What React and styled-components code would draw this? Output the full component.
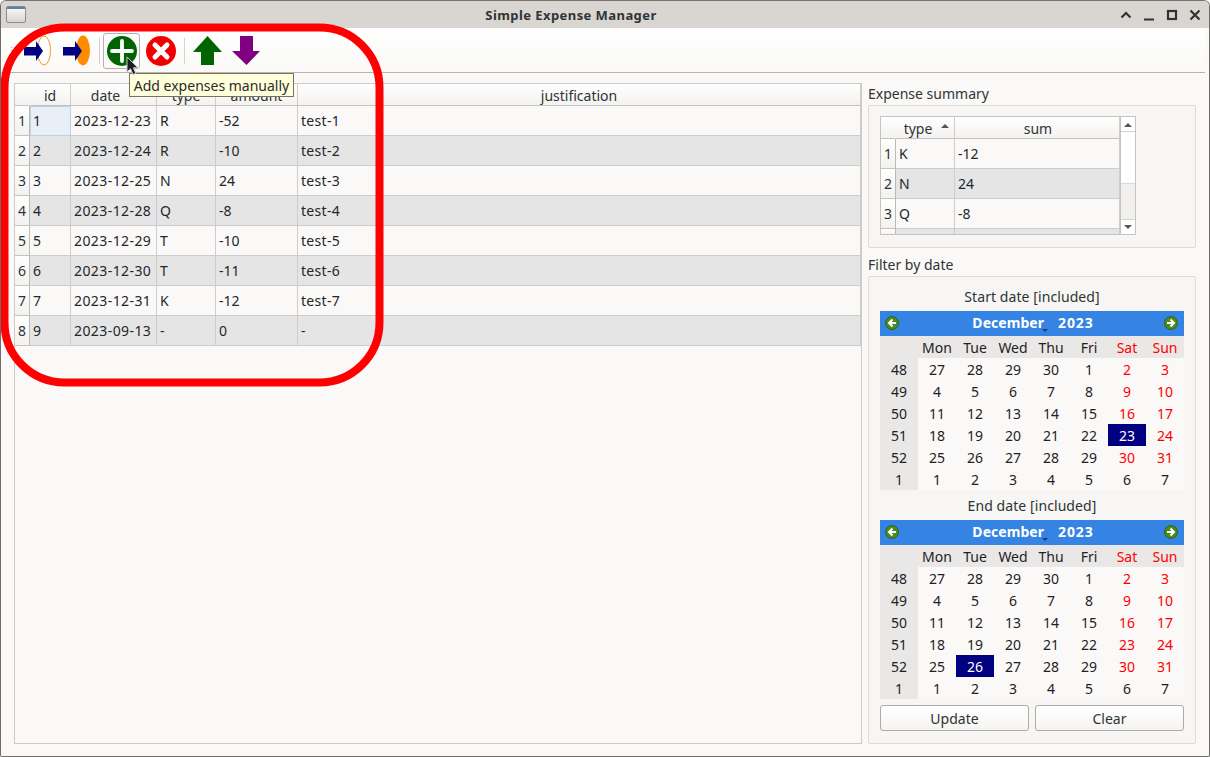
import React from "react";
import styled, { createGlobalStyle } from "styled-components";

const Global = createGlobalStyle`
  html, body { margin: 0; padding: 0; background: #fff; }
  body { font-family: "Noto Sans", sans-serif; font-size: 14px; color: #2e3436; }
`;

const Window = styled.div`
  position: relative; width: 1210px; height: 757px; box-sizing: border-box; overflow: hidden;
  display: flex; flex-direction: column; border: 1px solid #6f6d6a; border-top-color: #77736f;
  border-radius: 6px 6px 2px 2px; background: #faf9f7;
`;
const TitleBar = styled.div`
  height: 27px; flex: none; background: #d9d5d1; display: grid; grid-template-columns: auto 1fr auto; align-items: center; padding: 0 5px;
`;
const Title = styled.div`font-size: 13px; font-weight: 700; color: #2e3436; letter-spacing: .43px; text-align: center; padding-right: 3px;`;
const WinApp = styled.div`
  width: 18px; height: 15px; border: 1px solid #8f8d8a; border-radius: 2px; background: linear-gradient(#5d7fa8 0 2px, #f6f6f6 2px, #d6d6d6);
`;
const WinControls = styled.div`display: flex; justify-content: flex-end; gap: 9px; padding-right: 2px; align-items:center;`;
const Toolbar = styled.div`
  height: 45px; flex: none; box-sizing: border-box; display: flex; align-items: center; padding: 2px 0 0 9px;
  background: linear-gradient(#fff, #faf9f7); border-bottom: 1px solid #b8b5b1; margin-right: 4px;
`;
const Handle = styled.div`
  width: 5px; height: 10px; margin-right: 2px; background-image: radial-gradient(#aaa 0.7px, transparent 0.9px); background-size: 3px 3px;
`;
const ToolBtn = styled.div`
  width: 37px; height: 36px; box-sizing: border-box; display: flex; align-items: center; justify-content: center; margin: 0 1px;
  border: 1px solid ${p => (p.$hover ? "#b4b2af" : "transparent")}; border-radius: 3px; background: ${p => (p.$hover ? "#fbfbfa" : "transparent")};
`;
const ToolSep = styled.div`width: 1px; height: 26px; background: #d5d2cf; margin: 0 2px 0 4px;`;
const Main = styled.div`flex: 1; min-height: 0; display: flex; padding: 10px 13px 12px 13px; gap: 6px;`;
const TableFrame = styled.div`
  width: 848px; flex: none; box-sizing: border-box; border: 1px solid #cdcac6; background: #faf9f7; display: flex; flex-direction: column;
`;
const Row = styled.div`
  display: grid; grid-template-columns: ${p => p.$cols}; height: ${p => p.$h}px; box-sizing: border-box; flex: none;
`;
const HeadCell = styled.div`
  display: flex; align-items: center; justify-content: center; box-sizing: border-box; position: relative; padding-top: 2px;
  padding-right: ${p => p.$pr || 0}px; padding-left: ${p => p.$pl || 0}px;
  background: linear-gradient(#fff, #f3f2f0); border-right: 1px solid ${p => (p.$plain ? "transparent" : "#d0cdc9")}; border-bottom: 1px solid #c6c3bf; color: #2e3436;
`;
const RowHead = styled.div`
  display: flex; align-items: center; justify-content: center; box-sizing: border-box;
  background: linear-gradient(#fff, #f3f2f0); border-right: 1px solid #bdbab6; border-bottom: 1px solid #c6c3bf;
`;
const Cell = styled.div`
  display: flex; align-items: center; box-sizing: border-box; padding-left: 3px; white-space: nowrap; overflow: hidden;
  background: ${p => (p.$current ? "#e9eff6" : p.$alt ? "#e5e5e5" : "#faf9f7")};
  border-right: 1px solid #cdcdcd; border-bottom: 1px solid #cdcdcd; color: #232729;
  letter-spacing: ${p => p.$track || 0}px;
  ${p => p.$current && "outline: 1px solid #bcd0e8; outline-offset: -1px;"}
`;
const Side = styled.div`flex: 1; min-width: 0; display: flex; flex-direction: column;`;
const GroupTitle = styled.div`height: 22px; line-height: 22px; flex: none; color: #2e3436;`;
const SummaryBox = styled.div`
  box-sizing: border-box; height: 143px; flex: none; margin-bottom: 6px; padding: 10px 11px; background: #f7f6f4; border: 1px solid #dddad7; border-radius: 2px;
`;
const SummaryTable = styled.div`
  width: 256px; height: 119px; box-sizing: border-box; border: 1px solid #c6c4c1; display: flex; background: #faf9f7;
`;
const SummaryBody = styled.div`flex: 1; min-width: 0; overflow: hidden; display: flex; flex-direction: column;`;
const Scroll = styled.div`
  width: 14px; flex: none; display: flex; flex-direction: column; border-left: 1px solid #c6c4c1; background: #fff;
`;
const ScrollBtn = styled.div`height: 14px; flex: none; display: flex; align-items: center; justify-content: center; background: #fff;
  border-${p => (p.$top ? "bottom" : "top")}: 1px solid #d4d2cf;`;
const ScrollTrack = styled.div`flex: 1; background: #fff;`;
const ScrollThumb = styled.div`height: 36px; flex: none; background: #f1f0ee; border-top: 1px solid #dad8d5; box-sizing: border-box;`;
const SortUp = styled.span`
  position: absolute; right: 5px; top: 7px; width: 0; height: 0; border-left: 4px solid transparent; border-right: 4px solid transparent; border-bottom: 4px solid #555;
`;
const FilterBox = styled.div`
  flex: 1; min-height: 0; box-sizing: border-box; padding: 10px 11px 11px; background: #f7f6f4; border: 1px solid #dddad7; border-radius: 2px;
  display: flex; flex-direction: column;
`;
const CalLabel = styled.div`height: 24px; flex: none; text-align: center; line-height: 20px; color: #2e3436; letter-spacing: .08px;`;
const Cal = styled.div`width: 304px; flex: none; display: flex; flex-direction: column; margin-bottom: ${p => p.$mb || 0}px;`;
const CalNav = styled.div`
  height: 25px; box-sizing: border-box; background: #3584e4; display: flex; align-items: center; justify-content: space-between; padding: 0 6px 2px 5px; color: #fff; font-weight: 700;
`;
const CalMonth = styled.div`display: flex; align-items: center; font-size: 14px; letter-spacing: .05px; position: relative; gap: 14px; margin-left: 3px;`;
const CalYear = styled.span`letter-spacing: .9px;`;
const MonthArrow = styled.span`
  position: absolute; left: 70px; top: 16px; width: 0; height: 0; border-left: 3px solid transparent; border-right: 3px solid transparent; border-top: 3px solid #1c3f70;
`;
const CalGrid = styled.div`display: grid; grid-template-columns: repeat(8, 38px); grid-auto-rows: 22px; background: #faf9f7;`;
const CalCell = styled.div`
  display: flex; align-items: center; justify-content: center; background: ${p => (p.$sel ? "#000080" : p.$side ? "#e9e8e6" : "transparent")};
  color: ${p => (p.$sel ? "#fff" : p.$red ? "#f00" : "#1f2224")};
`;
const Buttons = styled.div`display: flex; gap: 6px; margin-top: 6px;`;
const Btn = styled.div`
  width: 149px; height: 26px; box-sizing: border-box; display: flex; align-items: center; justify-content: center;
  border: 1px solid #adaba8; border-radius: 3px; background: linear-gradient(#fff, #f5f4f2); color: #2e3436;
`;
const Tooltip = styled.div`
  position: absolute; left: 128px; top: 72px; width: 165px; height: 24px; box-sizing: border-box; white-space: nowrap; text-align: center; line-height: 23px;
  background: #ffffdc; border: 1px solid #77745a; color: #2b2b2b;
`;
const Annotation = styled.svg`position: absolute; left: 0; top: 0; pointer-events: none;`;
const Cursor = styled.svg`position: absolute; left: 125px; top: 55px;`;

const ToolIcon = ({ children }) => (
  <svg width="31" height="32" viewBox="0 0 31 32">{children}</svg>
);
const Arrow = () => <path d="M3 12H15V6L22 16L15 26V20.500H3Z" fill="#000080" />;
const IconIn = () => (
  <ToolIcon>
    <ellipse cx="23" cy="15.500" rx="6.500" ry="14.500" fill="#fff" stroke="#f59a23" strokeWidth="1" />
    <Arrow />
  </ToolIcon>
);
const IconOut = () => (
  <ToolIcon>
    <ellipse cx="23" cy="15.500" rx="7" ry="15" fill="#ff8c00" />
    <Arrow />
  </ToolIcon>
);
const IconAdd = () => (
  <ToolIcon>
    <circle cx="16" cy="16" r="15" fill="#006400" />
    <path d="M16 6v20M6 16h20" stroke="#fff" strokeWidth="3.800" strokeLinecap="round" />
  </ToolIcon>
);
const IconDel = () => (
  <ToolIcon>
    <circle cx="16" cy="16" r="15" fill="#f00000" />
    <path d="M10 10l12 12M22 10l-12 12" stroke="#fff" strokeWidth="5" strokeLinecap="round" />
  </ToolIcon>
);
const IconUp = () => (
  <ToolIcon><path d="M16.500 1L31 17H23V30H10V17H2Z" fill="#006400" /></ToolIcon>
);
const IconDown = () => (
  <ToolIcon><path d="M10 1H23V16H30L16.500 30L2 16H10Z" fill="#800080" /></ToolIcon>
);
const NavIcon = ({ dir }) => (
  <svg width="14" height="14" viewBox="0 0 14 14">
    <circle cx="7" cy="7" r="6.500" fill="#4e8a1e" stroke="#2a5c06" strokeWidth="0.800" />
    <path d={dir === "left" ? "M11 7H5M7.500 3.500L4 7l3.500 3.500" : "M3 7H9M6.500 3.500L10 7l-3.500 3.500"} stroke="#fff" strokeWidth="2" fill="none" />
  </svg>
);

const CtlIcon = ({ children }) => (
  <svg width="14" height="14" viewBox="0 0 14 14" fill="none" stroke="#2e3436" strokeWidth="2.200">{children}</svg>
);

const COLS = "15px 41px 86px 59px 82px 1fr";
const TRACK = [0, 0.42, 0, 0, 0.3];
const rows = [
  ["1", "2023-12-23", "R", "-52", "test-1"],
  ["2", "2023-12-24", "R", "-10", "test-2"],
  ["3", "2023-12-25", "N", "24", "test-3"],
  ["4", "2023-12-28", "Q", "-8", "test-4"],
  ["5", "2023-12-29", "T", "-10", "test-5"],
  ["6", "2023-12-30", "T", "-11", "test-6"],
  ["7", "2023-12-31", "K", "-12", "test-7"],
  ["9", "2023-09-13", "-", "0", "-"],
];
const SUMCOLS = "15px 59px 1fr";
const summary = [["K", "-12"], ["N", "24"], ["Q", "-8"]];
const days = ["Mon", "Tue", "Wed", "Thu", "Fri", "Sat", "Sun"];
const weeks = [
  [48, [27, 28, 29, 30, 1, 2, 3]],
  [49, [4, 5, 6, 7, 8, 9, 10]],
  [50, [11, 12, 13, 14, 15, 16, 17]],
  [51, [18, 19, 20, 21, 22, 23, 24]],
  [52, [25, 26, 27, 28, 29, 30, 31]],
  [1, [1, 2, 3, 4, 5, 6, 7]],
];

const Calendar = ({ selWeek, selDay, mb }) => (
  <Cal $mb={mb}>
    <CalNav>
      <NavIcon dir="left" />
      <CalMonth>
        <span>December</span>
        <MonthArrow />
        <CalYear>2023</CalYear>
      </CalMonth>
      <NavIcon dir="right" />
    </CalNav>
    <CalGrid>
      <CalCell $side />
      {days.map((d, i) => (
        <CalCell key={d} $side $red={i > 4}>{d}</CalCell>
      ))}
      {weeks.map(([w, ds], wi) => (
        <React.Fragment key={w}>
          <CalCell $side>{w}</CalCell>
          {ds.map((d, i) => (
            <CalCell key={i} $red={i > 4 && wi < 5} $sel={wi === selWeek && i === selDay}>{d}</CalCell>
          ))}
        </React.Fragment>
      ))}
    </CalGrid>
  </Cal>
);

export default function App() {
  return (
    <>
      <Global />
      <Window>
        <TitleBar>
          <WinApp />
          <Title>Simple Expense Manager</Title>
          <WinControls>
            <CtlIcon><path d="M2.500 9.500L7 5l4.500 4.500" /></CtlIcon>
            <CtlIcon><path d="M2 11.500h10" /></CtlIcon>
            <CtlIcon><rect x="3" y="3" width="8" height="8" /></CtlIcon>
            <CtlIcon><path d="M2.500 2.500l9 9M11.500 2.500l-9 9" /></CtlIcon>
          </WinControls>
        </TitleBar>
        <Toolbar>
          <Handle />
          <ToolBtn><IconIn /></ToolBtn>
          <ToolBtn><IconOut /></ToolBtn>
          <ToolSep />
          <ToolBtn $hover><IconAdd /></ToolBtn>
          <ToolBtn><IconDel /></ToolBtn>
          <ToolSep />
          <ToolBtn><IconUp /></ToolBtn>
          <ToolBtn><IconDown /></ToolBtn>
        </Toolbar>
        <Main>
          <TableFrame>
            <Row $cols={COLS} $h={22}>
              <HeadCell $plain />
              <HeadCell>id</HeadCell>
              <HeadCell $pr={16}>date</HeadCell>
              <HeadCell>type</HeadCell>
              <HeadCell>amount</HeadCell>
              <HeadCell>justification</HeadCell>
            </Row>
            {rows.map((r, i) => (
              <Row key={i} $cols={COLS} $h={30}>
                <RowHead>{i + 1}</RowHead>
                {r.map((c, j) => (
                  <Cell key={j} $alt={i % 2 === 1} $current={i === 0 && j === 0} $track={TRACK[j]}>{c}</Cell>
                ))}
              </Row>
            ))}
          </TableFrame>
          <Side>
            <GroupTitle>Expense summary</GroupTitle>
            <SummaryBox>
              <SummaryTable>
                <SummaryBody>
                  <Row $cols={SUMCOLS} $h={22}>
                    <HeadCell $plain />
                    <HeadCell $pr={14}>type<SortUp /></HeadCell>
                    <HeadCell $pl={2}>sum</HeadCell>
                  </Row>
                  {summary.map((r, i) => (
                    <Row key={i} $cols={SUMCOLS} $h={30}>
                      <RowHead>{i + 1}</RowHead>
                      {r.map((c, j) => <Cell key={j} $alt={i === 1}>{c}</Cell>)}
                    </Row>
                  ))}
                  <Row $cols={SUMCOLS} $h={7}>
                    <RowHead />
                    <Cell $alt />
                    <Cell $alt />
                  </Row>
                </SummaryBody>
                <Scroll>
                  <ScrollBtn $top><svg width="8" height="5"><path d="M0 5L4 1l4 4z" fill="#555" /></svg></ScrollBtn>
                  <ScrollTrack />
                  <ScrollThumb />
                  <ScrollBtn><svg width="8" height="5"><path d="M0 0l4 4 4-4z" fill="#555" /></svg></ScrollBtn>
                </Scroll>
              </SummaryTable>
            </SummaryBox>
            <GroupTitle>Filter by date</GroupTitle>
            <FilterBox>
              <CalLabel>Start date [included]</CalLabel>
              <Calendar selWeek={3} selDay={5} mb={6} />
              <CalLabel>End date [included]</CalLabel>
              <Calendar selWeek={4} selDay={1} />
              <Buttons>
                <Btn>Update</Btn>
                <Btn>Clear</Btn>
              </Buttons>
            </FilterBox>
          </Side>
        </Main>
        <Annotation width="1210" height="757">
          <rect x="3.500" y="26.500" width="375" height="355" rx="60" ry="60" fill="none" stroke="#f00" strokeWidth="8" />
        </Annotation>
        <Tooltip>Add expenses manually</Tooltip>
        <Cursor width="14" height="20" viewBox="0 0 14 20">
          <path d="M1 1V16L4.500 12.800L7 18.500L9.800 17.300L7.400 11.800H12Z" fill="#1d1d1d" stroke="#ccc" strokeWidth="1" />
        </Cursor>
      </Window>
    </>
  );
}
